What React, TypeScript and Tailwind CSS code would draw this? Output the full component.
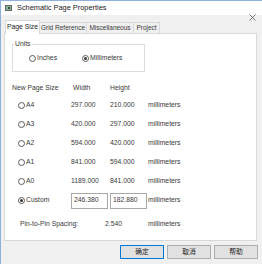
import React from "react";

function Radio({ checked }: { checked?: boolean }) {
  return (
    <span className="w-[7px] h-[7px] rounded-full border border-[#5a5a5a] bg-white flex items-center justify-center shrink-0">
      {checked && <span className="w-[3px] h-[3px] rounded-full bg-[#333]" />}
    </span>
  );
}

const rows = [
  { name: "A4", w: "297.000", h: "210.000" },
  { name: "A3", w: "420.000", h: "297.000" },
  { name: "A2", w: "594.000", h: "420.000" },
  { name: "A1", w: "841.000", h: "594.000" },
  { name: "A0", w: "1189.000", h: "841.000" },
];

export default function App() {
  return (
    <div
      className="w-[262px] h-[264px] bg-[#f0f0f0] flex flex-col overflow-hidden border-t border-l border-[#8fb0dc] text-[6.8px] text-[#3a3a3a] leading-none whitespace-nowrap"
      style={{ fontFamily: '"Liberation Sans", "Noto Sans CJK SC", sans-serif' }}
    >
      {/* title bar */}
      <div className="h-[14px] bg-white flex items-center pl-[4px] shrink-0">
        <span className="w-[7px] h-[6px] border border-[#666] bg-[#8fb39a] flex items-center justify-center">
          <span className="w-[2px] h-[2px] bg-[#2f5d3a]" />
        </span>
        <span className="ml-[5px] text-[7.4px] text-[#1a1a1a]">Schematic Page Properties</span>
      </div>

      {/* tabs */}
      <div className="h-[18px] flex items-end pl-[4px] shrink-0 relative z-10">
        <div className="w-[35px] h-[14px] bg-white border border-b-0 border-[#d9d9d9] flex items-center justify-center mb-[-1px] text-[#222]">
          Page Size
        </div>
        <div className="w-[47px] h-[11px] border border-l-0 border-b-0 border-[#d9d9d9] flex items-center justify-center text-[6.5px]">
          Grid Reference
        </div>
        <div className="w-[47px] h-[11px] border border-l-0 border-b-0 border-[#d9d9d9] flex items-center justify-center text-[6.5px]">
          Miscellaneous
        </div>
        <div className="w-[26px] h-[11px] border border-l-0 border-b-0 border-[#d9d9d9] flex items-center justify-center text-[6.5px]">
          Project
        </div>
        <div className="ml-auto mr-[6px] self-start mt-[-1px] w-[7px] h-[7px] flex items-center justify-center">
          <svg width="7" height="7" viewBox="0 0 7 7">
            <path d="M0.5 0.5 L6.5 6.5 M6.5 0.5 L0.5 6.5" stroke="#555" strokeWidth="0.8" />
          </svg>
        </div>
      </div>

      {/* panel */}
      <div className="ml-[3px] mr-[5px] h-[208px] bg-white border border-[#d9d9d9] shrink-0 flex flex-col">
        {/* units group */}
        <div className="ml-[7px] mt-[10px] w-[133px] h-[28px] border border-[#dcdcdc] relative flex items-center">
          <span className="absolute left-[1px] top-[-4px] bg-white px-[1px]">Units</span>
          <div className="flex items-center ml-[16px] mt-[1px]">
            <Radio />
            <span className="ml-[1px]">Inches</span>
          </div>
          <div className="flex items-center ml-[25px] mt-[1px]">
            <Radio checked />
            <span className="ml-[1px]">Millimeters</span>
          </div>
        </div>

        {/* table */}
        <div className="ml-[7px] mt-[9px] grid grid-cols-[59px_39px_38px_auto]">
          <div className="h-[15px] flex items-center">New Page Size</div>
          <div className="h-[15px] flex items-center pl-[2px]">Width</div>
          <div className="h-[15px] flex items-center">Height</div>
          <div className="h-[15px]" />
          {rows.map((r) => (
            <React.Fragment key={r.name}>
              <div className="h-[19px] flex items-center pl-[6px]">
                <Radio />
                <span className="ml-[1px]">{r.name}</span>
              </div>
              <div className="h-[19px] flex items-center">{r.w}</div>
              <div className="h-[19px] flex items-center">{r.h}</div>
              <div className="h-[19px] flex items-center">millimeters</div>
            </React.Fragment>
          ))}
          <div className="h-[19px] flex items-center pl-[6px]">
            <Radio checked />
            <span className="ml-[1px]">Custom</span>
          </div>
          <div className="h-[19px] flex items-center">
            <div className="w-[37px] h-[16px] border border-[#a8a8a8] flex items-center pl-[2px]">246.380</div>
          </div>
          <div className="h-[19px] flex items-center">
            <div className="w-[37px] h-[16px] border border-[#a8a8a8] flex items-center pl-[2px]">182.880</div>
          </div>
          <div className="h-[19px] flex items-center">millimeters</div>
        </div>

        <div className="ml-[15px] mt-[7px] h-[14px] flex items-center">
          <span className="w-[85px]">Pin-to-Pin Spacing:</span>
          <span className="w-[43px]">2.540</span>
          <span>millimeters</span>
        </div>
      </div>

      {/* buttons */}
      <div className="flex justify-end gap-[3px] pr-[4px] mt-[4px]">
        <button className="w-[44px] h-[14px] bg-[#e1e1e1] border border-[#0078d7] flex items-center justify-center text-[#222]">确定</button>
        <button className="w-[44px] h-[14px] bg-[#e1e1e1] border border-[#adadad] flex items-center justify-center text-[#222]">取消</button>
        <button className="w-[44px] h-[14px] bg-[#e1e1e1] border border-[#adadad] flex items-center justify-center text-[#222]">帮助</button>
      </div>
    </div>
  );
}
